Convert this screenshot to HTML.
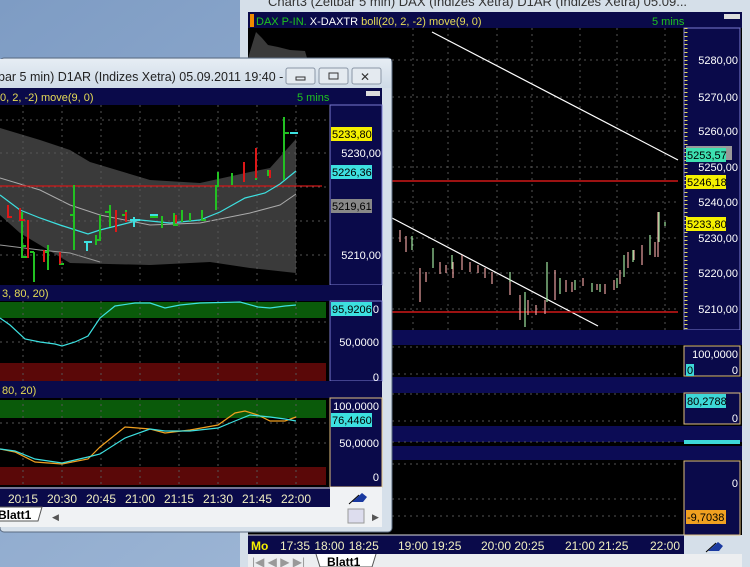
<!DOCTYPE html>
<html><head><meta charset="utf-8"><style>
html,body{margin:0;padding:0;width:750px;height:567px;overflow:hidden;background:#8aa6c8}
svg{display:block}
text{font-family:"Liberation Sans",sans-serif}
</style></head><body>
<svg width="750" height="567" viewBox="0 0 750 567" xmlns="http://www.w3.org/2000/svg">
<defs>
<linearGradient id="desk" x1="0" y1="0" x2="1" y2="1"><stop offset="0" stop-color="#7e9cc4"/><stop offset="1" stop-color="#a9c0dc"/></linearGradient>
<linearGradient id="tb" x1="0" y1="0" x2="0" y2="1"><stop offset="0" stop-color="#e6edf4"/><stop offset="1" stop-color="#cfdbe7"/></linearGradient>
</defs>
<rect width="750" height="567" fill="url(#desk)"/>
<!-- back window frame -->
<rect x="240" y="0" width="510" height="567" fill="#d5dfe9"/>
<text x="268" y="6" font-size="13" fill="#333">Chart3 (Zeitbar 5 min)  DAX (Indizes Xetra) D1AR (Indizes Xetra) 05.09...</text>
<rect x="248" y="12" width="494" height="523" fill="#000"/>
<rect x="248" y="12" width="494" height="16" fill="#0a0a4a"/>
<rect x="250" y="14" width="4" height="13" fill="#f08a00"/>
<text x="256" y="25" font-size="11"><tspan fill="#1fc41f">DAX P-IN.</tspan><tspan fill="#fff"> X-DAXTR</tspan><tspan fill="#e6dc55"> boll(20, 2, -2) move(9, 0)</tspan></text>
<text x="652" y="25" font-size="11" fill="#1fc41f">5 mins</text>
<rect x="724" y="14" width="16" height="5" fill="#ddd"/>
<!-- back chart gray band remnant -->
<polygon points="256,32 262,38 268,45 278,47 290,50 305,51 307,58 248,58" fill="#3a3a3a"/>
<!-- back grid -->
<g stroke="#555" stroke-dasharray="2,4" stroke-width="1">
<line x1="413" y1="28" x2="413" y2="330"/><line x1="448" y1="28" x2="448" y2="330"/><line x1="497" y1="28" x2="497" y2="330"/><line x1="532" y1="28" x2="532" y2="330"/><line x1="580" y1="28" x2="580" y2="330"/><line x1="617" y1="28" x2="617" y2="330"/><line x1="665" y1="28" x2="665" y2="330"/>
<line x1="392" y1="60" x2="680" y2="60"/><line x1="392" y1="97" x2="680" y2="97"/><line x1="392" y1="131" x2="680" y2="131"/><line x1="392" y1="167" x2="680" y2="167"/><line x1="392" y1="202" x2="680" y2="202"/><line x1="392" y1="238" x2="680" y2="238"/><line x1="392" y1="273" x2="680" y2="273"/><line x1="392" y1="309" x2="680" y2="309"/>
</g>
<line x1="432" y1="32" x2="678" y2="160" stroke="#fff" stroke-width="1.2"/>
<line x1="392" y1="218" x2="598" y2="326" stroke="#fff" stroke-width="1.2"/>
<line x1="392" y1="181" x2="678" y2="181" stroke="#d01818" stroke-width="1.5"/>
<line x1="392" y1="312" x2="678" y2="312" stroke="#d01818" stroke-width="1.5"/>
<!-- back bars -->
<g stroke-width="1.2">
<path d="M400 230v12M406 236v16M420 268v34M426 272v10M440 262v12M446 265v8M453 262v16M462 255v15M470 262v10M478 265v8M485 268v10M492 272v12M510 280v15M520 295v25M528 300v15M536 305v10M545 300v14M555 270v30M566 280v12M572 282v10M583 278v8M597 284v6M605 284v10M614 280v10M620 270v14M628 252v16M634 250v10M642 245v20M655 242v15M658 212v45" stroke="#e8a0a0"/>
<path d="M412 236v14M433 248v20M452 255v14M510 272v10M525 292v35M547 262v40M560 278v16M575 280v10M592 283v9M600 284v8M617 278v10M624 255v22M633 250v12M650 235v20M659 212v30M665 222v4" stroke="#9fe59f"/>
</g>
<!-- back price axis -->
<rect x="684" y="28" width="56" height="302" fill="#0a0a4a" stroke="#7b7bd0"/>
<line x1="686" y1="28" x2="686" y2="330" stroke="#e6dc55" stroke-dasharray="1,3" stroke-width="3"/>
<g font-size="11" fill="#fff" text-anchor="end">
<text x="738" y="64">5280,00</text><text x="738" y="101">5270,00</text><text x="738" y="135">5260,00</text><text x="738" y="171">5250,00</text><text x="738" y="206">5240,00</text><text x="738" y="242">5230,00</text><text x="738" y="277">5220,00</text><text x="738" y="313">5210,00</text>
</g>
<rect x="686" y="146" width="46" height="14" fill="#999"/>
<rect x="686" y="148" width="40" height="14" fill="#3de0b0"/><text x="687" y="159" font-size="11" fill="#000">5253,57</text>
<rect x="686" y="175" width="40" height="14" fill="#f5f000"/><text x="687" y="186" font-size="11" fill="#000">5246,18</text>
<rect x="686" y="217" width="40" height="14" fill="#f5f000"/><text x="687" y="228" font-size="11" fill="#000">5233,80</text>
<!-- back lower panels -->
<rect x="248" y="330" width="494" height="15" fill="#0c0c55"/>
<rect x="248" y="377" width="494" height="16" fill="#0c0c55"/>
<rect x="248" y="426" width="494" height="16" fill="#0c0c55"/>
<rect x="248" y="446" width="494" height="14" fill="#0c0c55"/>
<g stroke="#555" stroke-dasharray="2,4"><line x1="392" y1="347" x2="680" y2="347"/><line x1="392" y1="374" x2="680" y2="374"/><line x1="392" y1="394" x2="680" y2="394"/><line x1="392" y1="421" x2="680" y2="421"/><line x1="392" y1="442" x2="680" y2="442"/><line x1="392" y1="464" x2="680" y2="464"/><line x1="392" y1="499" x2="680" y2="499"/><line x1="392" y1="516" x2="680" y2="516"/></g>
<rect x="684" y="346" width="56" height="30" fill="#0a0a4a" stroke="#e0c080"/>
<text x="738" y="358" font-size="11" fill="#fff" text-anchor="end">100,0000</text><text x="738" y="374" font-size="11" fill="#fff" text-anchor="end">0</text>
<rect x="686" y="364" width="8" height="12" fill="#3dd8d8"/><text x="687" y="374" font-size="11" fill="#000">0</text>
<rect x="684" y="393" width="56" height="31" fill="#0a0a4a" stroke="#e0c080"/>
<rect x="686" y="394" width="40" height="14" fill="#3dd8d8"/><text x="687" y="405" font-size="11" fill="#000">80,2788</text>
<text x="738" y="422" font-size="11" fill="#fff" text-anchor="end">0</text>
<rect x="684" y="440" width="56" height="4" fill="#3dd8d8"/>
<rect x="684" y="461" width="56" height="74" fill="#0a0a4a" stroke="#e0c080"/>
<text x="738" y="487" font-size="11" fill="#fff" text-anchor="end">0</text>
<rect x="686" y="510" width="40" height="14" fill="#f0a020"/><text x="687" y="521" font-size="11" fill="#000">-9,7038</text>
<rect x="248" y="535" width="436" height="19" fill="#0a0a4a"/>
<line x1="248" y1="535" x2="684" y2="535" stroke="#ddd"/>
<text x="251" y="550" font-size="12" font-weight="bold" fill="#f5f000">Mo</text>
<text x="280" y="550" font-size="12" fill="#f0eec0" word-spacing="1">17:35 18:00 18:25</text>
<text x="398" y="550" font-size="12" fill="#f0eec0">19:00 19:25</text>
<text x="481" y="550" font-size="12" fill="#f0eec0">20:00 20:25</text>
<text x="565" y="550" font-size="12" fill="#f0eec0">21:00 21:25</text>
<text x="650" y="550" font-size="12" fill="#f0eec0">22:00</text>
<path d="M708 551l10-9 5 4-4 5z" fill="#1a3aa0"/><line x1="706" y1="552" x2="716" y2="543" stroke="#000"/>
<rect x="248" y="554" width="494" height="13" fill="#eceef0"/>
<text x="252" y="566" font-size="12" fill="#999">|◀ ◀ ▶ ▶|</text>
<path d="M316 554l4 13h52l4-13" fill="#fff" stroke="#555"/>
<text x="327" y="566" font-size="12" font-weight="bold" fill="#000">Blatt1</text>

<!-- front window -->
<rect x="0" y="58" width="392" height="474" rx="4" fill="#d6e0ea" stroke="#5a6a80"/>
<rect x="0" y="59" width="391" height="29" fill="url(#tb)"/>
<text x="-2" y="81" font-size="12.5" fill="#222">bar 5 min)  D1AR (Indizes Xetra) 05.09.2011 19:40 - 0...</text>
<rect x="286" y="68" width="29" height="16" rx="2" fill="#e4eaf0" stroke="#8a96a6"/><rect x="296" y="77" width="9" height="3" fill="none" stroke="#333"/>
<rect x="319" y="68" width="29" height="16" rx="2" fill="#e4eaf0" stroke="#8a96a6"/><rect x="329" y="73" width="9" height="6" fill="none" stroke="#333"/>
<rect x="352" y="68" width="29" height="16" rx="2" fill="#e4eaf0" stroke="#8a96a6"/><text x="360" y="81" font-size="12" fill="#333">✕</text>
<rect x="0" y="88" width="382" height="17" fill="#0a0a4a"/>
<text x="0" y="101" font-size="11" fill="#e6dc55">0, 2, -2) move(9, 0)</text>
<text x="297" y="101" font-size="11" fill="#1fc41f">5 mins</text>
<rect x="366" y="91" width="14" height="5" fill="#ddd"/>
<rect x="0" y="105" width="330" height="180" fill="#000"/>
<polygon points="0,128 40,140 70,150 90,162 150,180 200,183 250,172 270,168 296,139 296,273 250,268 210,262 150,265 70,263 20,233 0,215" fill="#3a3a3a"/>
<polyline points="0,178 40,190 70,205 100,215 150,225 200,223 250,213 280,205 296,194" fill="none" stroke="#aaa"/>
<polyline points="0,245 40,250 70,253 100,262" fill="none" stroke="#999"/>
<g stroke="#555" stroke-dasharray="2,4">
<line x1="23" y1="105" x2="23" y2="285"/><line x1="62" y1="105" x2="62" y2="285"/><line x1="101" y1="105" x2="101" y2="285"/><line x1="140" y1="105" x2="140" y2="285"/><line x1="179" y1="105" x2="179" y2="285"/><line x1="218" y1="105" x2="218" y2="285"/><line x1="257" y1="105" x2="257" y2="285"/><line x1="296" y1="105" x2="296" y2="285"/>
<line x1="0" y1="120" x2="328" y2="120"/><line x1="0" y1="153" x2="328" y2="153"/><line x1="0" y1="187" x2="328" y2="187"/><line x1="0" y1="221" x2="328" y2="221"/><line x1="0" y1="255" x2="328" y2="255"/>
</g>
<line x1="0" y1="186" x2="322" y2="186" stroke="#d01818" stroke-width="1.3"/>
<polyline points="0,195 20,210 40,218 60,225 88,234 100,230 120,225 140,220 170,223 200,220 220,212 245,198 265,193 280,184 296,171" fill="none" stroke="#3de0e0" stroke-width="1.2"/>
<g stroke-width="2" fill="none">
<path d="M8 205v12h4M22 212v45h5M22 246h4M34 252v30M30 252h4M48 245v25M45 252h4M60 252v12h4M74 185v65M70 215h4M96 235v10M100 215v25h-4M110 205v22M105 212h6M126 210v12M122 215h4M150 217h8M162 216v12M174 213v12h4M182 210v12M190 213v8M202 210v10h4M216 185v25M218 172v15M232 173v12M244 168v12M256 160v20M268 170v6M284 117v63M285 133h4" stroke="#22c022"/>
<path d="M8 205v12h4M20 208v12h5M28 220v38M44 250v12M60 252v12M116 210v22M126 212v10M176 215v8M244 162v20M256 148v30M270 170v8" stroke="#dd1818"/>
<path d="M84 242h8M87 242v9M134 217v10M130 220h10M150 215h8M290 133h8" stroke="#3de0e0"/>
</g>
<rect x="330" y="105" width="52" height="180" fill="#0a0a4a" stroke="#7b7bd0"/>
<text x="381" y="157" font-size="11" fill="#fff" text-anchor="end">5230,00</text>
<text x="381" y="259" font-size="11" fill="#fff" text-anchor="end">5210,00</text>
<rect x="331" y="127" width="41" height="14" fill="#f5f000"/><text x="332" y="138" font-size="11" fill="#000">5233,80</text>
<rect x="331" y="165" width="41" height="14" fill="#3de0e0"/><text x="332" y="176" font-size="11" fill="#000">5226,36</text>
<rect x="331" y="199" width="41" height="14" fill="#888"/><text x="332" y="210" font-size="11" fill="#000">5219,61</text>
<!-- indicator 1 -->
<rect x="0" y="285" width="382" height="16" fill="#0a0a4a"/>
<text x="2" y="297" font-size="11" fill="#e6dc55">3, 80, 20)</text>
<rect x="0" y="301" width="330" height="86" fill="#000"/>
<rect x="0" y="302" width="326" height="16" fill="#0a5a0a"/>
<rect x="0" y="363" width="326" height="18" fill="#5a0808"/>
<g stroke="#555" stroke-dasharray="2,4"><line x1="0" y1="322" x2="326" y2="322"/><line x1="0" y1="342" x2="326" y2="342"/><line x1="23" y1="301" x2="23" y2="381"/><line x1="62" y1="301" x2="62" y2="381"/><line x1="101" y1="301" x2="101" y2="381"/><line x1="140" y1="301" x2="140" y2="381"/><line x1="179" y1="301" x2="179" y2="381"/><line x1="218" y1="301" x2="218" y2="381"/><line x1="257" y1="301" x2="257" y2="381"/><line x1="296" y1="301" x2="296" y2="381"/></g>
<polyline points="0,318 10,325 25,339 40,342 55,344 62,346 75,342 88,336 100,318 115,306 135,303 150,303 165,308 180,305 200,303 240,302 258,307 270,308 285,306 296,305" fill="none" stroke="#3de0e0" stroke-width="1.2"/>
<rect x="330" y="301" width="52" height="80" fill="#0a0a4a" stroke="#7b7bd0"/>
<rect x="331" y="302" width="41" height="14" fill="#3de0e0"/><text x="332" y="313" font-size="11" fill="#000">95,9206</text>
<text x="379" y="313" font-size="11" fill="#fff" text-anchor="end">0</text>
<text x="379" y="346" font-size="11" fill="#fff" text-anchor="end">50,0000</text>
<text x="379" y="381" font-size="11" fill="#fff" text-anchor="end">0</text>
<!-- indicator 2 -->
<rect x="0" y="381" width="382" height="17" fill="#0a0a4a"/>
<text x="2" y="394" font-size="11" fill="#e6dc55">80, 20)</text>
<rect x="0" y="398" width="330" height="89" fill="#000"/>
<rect x="0" y="400" width="326" height="18" fill="#0a5a0a"/>
<rect x="0" y="467" width="326" height="18" fill="#5a0808"/>
<g stroke="#555" stroke-dasharray="2,4"><line x1="0" y1="423" x2="326" y2="423"/><line x1="0" y1="443" x2="326" y2="443"/><line x1="23" y1="398" x2="23" y2="487"/><line x1="62" y1="398" x2="62" y2="487"/><line x1="101" y1="398" x2="101" y2="487"/><line x1="140" y1="398" x2="140" y2="487"/><line x1="179" y1="398" x2="179" y2="487"/><line x1="218" y1="398" x2="218" y2="487"/><line x1="257" y1="398" x2="257" y2="487"/><line x1="296" y1="398" x2="296" y2="487"/></g>
<polyline points="0,449 15,452 35,462 62,464 88,459 100,447 125,427 150,429 165,433 190,430 218,425 235,413 245,411 258,415 270,421 285,421 296,417" fill="none" stroke="#f0a020" stroke-width="1.2"/>
<polyline points="0,449 15,451 35,459 62,463 88,457 100,454 125,438 150,429 165,431 190,431 218,428 235,421 250,415 270,417 285,419 296,421" fill="none" stroke="#3de0e0" stroke-width="1.2"/>
<rect x="330" y="398" width="52" height="89" fill="#0a0a4a" stroke="#e0c080"/>
<text x="379" y="410" font-size="11" fill="#fff" text-anchor="end">100,0000</text>
<rect x="331" y="413" width="41" height="14" fill="#3de0e0"/><text x="332" y="424" font-size="11" fill="#000">76,4460</text>
<text x="379" y="447" font-size="11" fill="#fff" text-anchor="end">50,0000</text>
<text x="379" y="481" font-size="11" fill="#fff" text-anchor="end">0</text>
<!-- time axis -->
<rect x="0" y="487" width="330" height="20" fill="#0a0a4a"/>
<line x1="0" y1="488" x2="330" y2="488" stroke="#ddd"/>
<rect x="330" y="487" width="52" height="20" fill="#f0f2f4"/>
<path d="M352 502l10-9 5 4-4 5z" fill="#1a3aa0"/><line x1="349" y1="504" x2="359" y2="495" stroke="#000"/>
<g font-size="12" fill="#f0eec0" text-anchor="middle"><text x="23" y="503">20:15</text><text x="62" y="503">20:30</text><text x="101" y="503">20:45</text><text x="140" y="503">21:00</text><text x="179" y="503">21:15</text><text x="218" y="503">21:30</text><text x="257" y="503">21:45</text><text x="296" y="503">22:00</text></g>
<rect x="0" y="507" width="382" height="20" fill="#f0f2f4"/>
<path d="M0 507h42l-4 14h-38" fill="#fff" stroke="#555"/>
<text x="-2" y="519" font-size="12" font-weight="bold" fill="#000">Blatt1</text>
<text x="52" y="520" font-size="9" fill="#555">◀</text>
<rect x="348" y="509" width="16" height="14" fill="#dde" stroke="#999"/>
<text x="372" y="520" font-size="9" fill="#555">▶</text>
</svg>
</body></html>
